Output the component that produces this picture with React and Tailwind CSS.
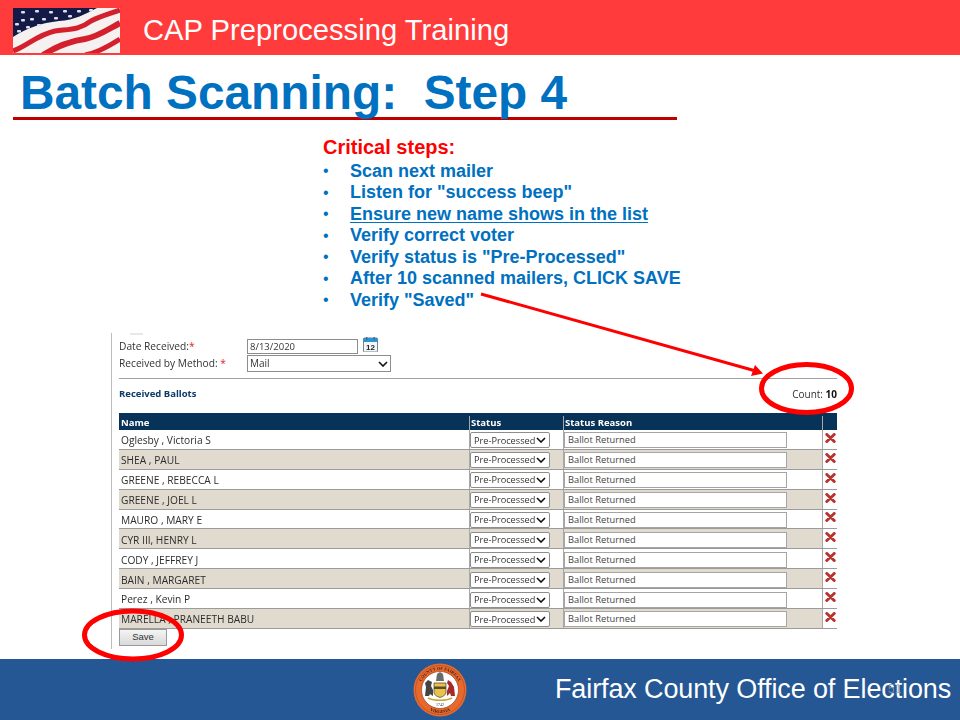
import React from "react";

const rows = [
  "Oglesby , Victoria S",
  "SHEA , PAUL",
  "GREENE , REBECCA L",
  "GREENE , JOEL L",
  "MAURO , MARY E",
  "CYR III, HENRY L",
  "CODY , JEFFREY J",
  "BAIN , MARGARET",
  "Perez , Kevin P",
  "MARELLA , PRANEETH BABU",
];

const steps = [
  "Scan next mailer",
  'Listen for "success beep"',
  "Ensure new name shows in the list",
  "Verify correct voter",
  'Verify status is "Pre-Processed"',
  "After 10 scanned mailers, CLICK SAVE",
  'Verify "Saved"',
];

function Flag() {
  return (
    <svg width="107" height="45" viewBox="0 0 107 45" className="block shrink-0 blur-[0.6px]">
      <rect width="107" height="45" fill="#f4f1f0" />
      <g fill="none" stroke="#d3202c">
        <path d="M0 43C14 38 24 27 42 23C58 21 66 22 78 13C88 8 96 6 107 2" strokeWidth="5" />
        <path d="M30 47C44 38 58 33 72 31C84 29 94 22 107 15" strokeWidth="6" />
        <path d="M72 47C84 45 96 38 107 31" strokeWidth="5" />
      </g>
      <path d="M0 0H84C72 6 62 12 46 13C28 15 14 20 0 29Z" fill="#141a47" />
      <g fill="#dfe0ea">
        {[[8,3],[22,2],[36,3],[50,2],[64,2],[76,1],[8,11],[17,10],[29,10],[41,9],[55,7],[2,15],[13,18],[24,16],[4,22]].map(([x, y], i) => (
          <rect key={i} x={x} y={y} width="4" height="2.5" rx="1" />
        ))}
      </g>
    </svg>
  );
}

function Seal() {
  return (
    <svg width="54" height="54" viewBox="0 0 54 54" className="block shrink-0 blur-[0.3px]">
      <defs>
        <path id="sealTop" d="M6.8 27a20.2 20.2 0 0 1 40.4 0" />
        <path id="sealBottom" d="M4 27a23 23 0 0 0 46 0" />
      </defs>
      <circle cx="27" cy="27" r="26.5" fill="#e9682c" />
      <circle cx="27" cy="27" r="24.5" fill="none" stroke="#8a4a2a" strokeWidth="0.5" />
      <circle cx="27" cy="27" r="18.5" fill="#ffffff" stroke="#7a3a20" strokeWidth="0.6" />
      <text fontSize="4.4" fontFamily="Liberation Serif, serif" fill="#4a2412" fontWeight="700">
        <textPath href="#sealTop" startOffset="50%" textAnchor="middle">COUNTY OF FAIRFAX</textPath>
      </text>
      <text fontSize="4.4" fontFamily="Liberation Serif, serif" fill="#4a2412" fontWeight="700">
        <textPath href="#sealBottom" startOffset="50%" textAnchor="middle">VIRGINIA</textPath>
      </text>
      <path d="M21 20H33V29C33 32 30 33.5 27 34.5C24 33.5 21 32 21 29Z" fill="#e9c24a" stroke="#4a3a20" strokeWidth="0.7" />
      <rect x="21" y="23.5" width="12" height="2.5" fill="#5a4a30" />
      <path d="M12 33L13 24L12 20L15 17L19 19L18 23L20 27L20 33L17 31L16 33Z" fill="#444444" />
      <path d="M42 33L41 24L38 19L35 17L34 20L36 23L34 28L34 33L37 30L38 33Z" fill="#a72a2a" />
      <path d="M23 18L24 11L27 9L30 11L31 18Z" fill="#6a6a6a" />
      <path d="M15 35C21 38 33 38 39 35" fill="none" stroke="#c7a83a" strokeWidth="1.5" />
      <text x="27" y="42.5" fontSize="4" textAnchor="middle" fontFamily="Liberation Serif, serif" fill="#333">1742</text>
    </svg>
  );
}

function CalendarIcon() {
  return (
    <svg width="15" height="15" viewBox="0 0 15 15" className="block">
      <rect x="0.5" y="1" width="14" height="14" rx="1" fill="#f4f7f8" stroke="#6d8796" />
      <rect x="0.5" y="1" width="14" height="4" fill="#2b94d6" />
      <rect x="3" y="0" width="1.5" height="3" fill="#5a6a78" />
      <rect x="10.5" y="0" width="1.5" height="3" fill="#5a6a78" />
      <text x="7.5" y="13" fontSize="8" fontWeight="700" textAnchor="middle" fontFamily="Liberation Sans, sans-serif" fill="#222">12</text>
    </svg>
  );
}

function XIcon() {
  return (
    <svg width="11" height="10" viewBox="0 0 11 10" className="block">
      <path d="M1.8 1.5L9.2 8.5M9.2 1.5L1.8 8.5" stroke="#b8332e" strokeWidth="3" strokeLinecap="round" />
    </svg>
  );
}

function Chevron() {
  return (
    <svg width="10" height="6" viewBox="0 0 10 6" className="block shrink-0">
      <path d="M1 1L5 5L9 1" fill="none" stroke="#111" strokeWidth="1.6" />
    </svg>
  );
}

function SelectBox({ label, className }) {
  return (
    <div className={`flex items-center justify-between whitespace-nowrap border border-[#8d8d8d] bg-white text-[#333] ${className}`}>
      <span>{label}</span>
      <Chevron />
    </div>
  );
}

function Row({ name, index }) {
  const shaded = index % 2 === 1;
  return (
    <div className={`flex h-[19.9px] border-b border-[#9b9b9b] ${shaded ? "bg-[#e0dacf]" : "bg-white"}`}>
      <div className="flex w-[350px] items-center pl-[2px] pt-[3px] text-[10.2px] text-[#2d2d2d]">{name}</div>
      <div className="flex w-[94px] items-center border-l border-[#a8a8a8] pt-[2px]">
        <SelectBox label="Pre-Processed" className="h-[16px] w-[80px] rounded-[2px] pl-[3px] pr-[3px] text-[9.2px]" />
      </div>
      <div className="flex w-[259px] items-center border-l border-[#a8a8a8] pt-[2px]">
        <div className="flex h-[16px] w-[223px] items-center border border-[#a5a5a5] bg-white pl-[3px] text-[9.3px] text-[#444]">Ballot Returned</div>
      </div>
      <div className="flex w-[15px] items-center justify-center border-l border-[#a8a8a8] bg-white pb-[3px]">
        <XIcon />
      </div>
    </div>
  );
}

export default function App() {
  return (
    <div className="relative flex h-[720px] w-[960px] flex-col overflow-hidden bg-white font-['Liberation_Sans',Arial,sans-serif]">
      <header className="flex h-[55px] shrink-0 items-center bg-[#ff3b3b] pl-[13px]">
        <div className="mt-[6px]"><Flag /></div>
        <div className="ml-[23px] mt-[7px] text-[29.2px] leading-none text-white">CAP Preprocessing Training</div>
      </header>

      <div className="ml-[13px] h-[65px] w-[664px] shrink-0 border-b-[3px] border-[#c00000] pl-[7px] pt-[10px] text-[47.8px] font-bold leading-[56px] text-[#0070c0] whitespace-pre">
        {"Batch Scanning:  Step 4"}
      </div>

      <section className="ml-[323px] mt-[16px] shrink-0">
        <div className="text-[20px] font-bold leading-[23px] text-[#ff0000]">Critical steps:</div>
        <ul className="mt-[1.7px]">
          {steps.map((s, i) => (
            <li key={s} className="flex h-[21.5px] items-center text-[18px] font-bold text-[#0070c0]">
              <span className="w-[27px] shrink-0 text-[16px] font-normal">•</span>
              <span className={i === 2 ? "underline underline-offset-2" : ""}>{s}</span>
            </li>
          ))}
        </ul>
      </section>

      <section className="ml-[111px] mt-[21.8px] flex h-[316px] w-[726px] shrink-0 flex-col border-l border-[#bdbdbd] pl-[7px] font-['Open_Sans','Noto_Sans',sans-serif] blur-[0.25px]">
        <div className="ml-[11px] h-[2px] w-[13px] bg-[#e8e8e8]" />
        <div className="mt-[3px] flex h-[17px] items-center text-[10.2px] text-[#333]">
          <div className="w-[128px]">Date Received:<span className="text-[#e02020]">*</span></div>
          <div className="flex h-[15px] w-[111px] items-center border border-[#8d8d8d] pl-[2px] pt-[2px] text-[9.5px]">8/13/2020</div>
          <div className="ml-[5px] -mt-[4px]"><CalendarIcon /></div>
        </div>
        <div className="flex h-[17px] items-center text-[10.2px] text-[#333]">
          <div className="w-[128px] pt-[1px]">Received by Method: <span className="text-[#e02020]">*</span></div>
          <SelectBox label="Mail" className="h-[17px] w-[144px] pl-[2px] pr-[2px] pt-[1px] text-[10px]" />
        </div>
        <div className="mt-[6px] h-px w-full bg-[#a0a0a0]" />
        <div className="flex h-[29px] items-center justify-between pt-[2px] text-[9.5px]">
          <div className="font-bold text-[#0a3a66]">Received Ballots</div>
          <div className="text-[10px] text-[#333]">Count: <span className="font-bold text-[#111]">10</span></div>
        </div>
        <div className="mt-[5px] w-[718px]">
          <div className="flex h-[17px] items-center bg-[#083358] pt-[3px] text-[9.5px] font-bold text-white">
            <div className="w-[350px] pl-[2px]">Name</div>
            <div className="flex h-full w-[94px] items-center border-l border-[#a8a8a8] pl-[1px]">Status</div>
            <div className="flex h-full w-[259px] items-center border-l border-[#a8a8a8] pl-[1px]">Status Reason</div>
            <div className="h-full w-[15px] border-l border-[#a8a8a8]" />
          </div>
          {rows.map((n, i) => (
            <Row key={n} name={n} index={i} />
          ))}
        </div>
        <button className="flex h-[17px] w-[48px] items-center justify-center border border-[#9a9a9a] bg-gradient-to-b from-[#f4f4f4] to-[#d9d9d9] font-['Liberation_Sans',sans-serif] text-[9.5px] text-[#333]">
          Save
        </button>
      </section>

      <footer className="relative mt-auto flex h-[61px] shrink-0 items-center bg-[#255794] pl-[413px]">
        <Seal />
        <div className="ml-[88px] text-[27px] leading-none tracking-[-0.12px] text-white">Fairfax County Office of Elections</div>
        <div className="absolute left-[888px] top-[21px] text-[12px] text-[#8f9cb0] opacity-80">51</div>
      </footer>

      <svg width="960" height="720" viewBox="0 0 960 720" className="pointer-events-none absolute left-0 top-0">
        <line x1="481" y1="294" x2="754" y2="370.5" stroke="#ff0000" strokeWidth="3" />
        <path d="M763 373.5L755 365L751 376Z" fill="#ff0000" />
        <ellipse cx="806.5" cy="388.5" rx="45" ry="24" fill="none" stroke="#ff0000" strokeWidth="5" />
        <ellipse cx="133" cy="635" rx="48.5" ry="24" fill="none" stroke="#ff0000" strokeWidth="5" />
      </svg>
    </div>
  );
}
